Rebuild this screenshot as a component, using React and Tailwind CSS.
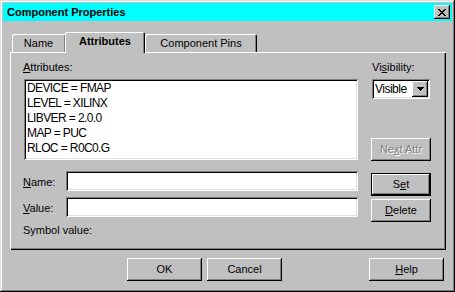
import React from 'react';

const raised =
  'shadow-[inset_-1px_-1px_0_#000,inset_1px_1px_0_#fff,inset_-2px_-2px_0_#808080]';
const sunken =
  'shadow-[inset_1px_1px_0_#808080,inset_-1px_-1px_0_#fff,inset_2px_2px_0_#000,inset_-2px_-2px_0_#dfdfdf]';

const CloseGlyph = () => (
  <svg width="8" height="7" viewBox="0 0 8 7" shapeRendering="crispEdges">
    <path
      fill="#000"
      d="M0 0h2v1H0z M6 0h2v1H6z M1 1h2v1H1z M5 1h2v1H5z M2 2h4v1H2z M3 3h2v1H3z M2 4h4v1H2z M1 5h2v1H1z M5 5h2v1H5z M0 6h2v1H0z M6 6h2v1H6z"
    />
  </svg>
);

const DownGlyph = () => (
  <svg width="7" height="4" viewBox="0 0 7 4" shapeRendering="crispEdges">
    <path fill="#000" d="M0 0h7v1H0z M1 1h5v1H1z M2 2h3v1H2z M3 3h1v1H3z" />
  </svg>
);

const Button = ({ children, className = '', disabled = false }) => (
  <div
    className={`flex items-center justify-center h-[23px] bg-[#c0c0c0] text-[11px] leading-[13px] ${
      disabled ? 'text-[#808080] [text-shadow:1px_1px_0_#fff]' : 'text-black'
    } ${raised} ${className}`}
  >
    {children}
  </div>
);

const attributes = ['DEVICE = FMAP', 'LEVEL = XILINX', 'LIBVER = 2.0.0', 'MAP = PUC', 'RLOC = R0C0.G'];

export default function App() {
  return (
    <div
      className="w-[455px] h-[292px] p-[3px] bg-[#c0c0c0] font-['Liberation_Sans',Arial,sans-serif] text-black shadow-[inset_-1px_-1px_0_#000,inset_1px_1px_0_#dfdfdf,inset_-2px_-2px_0_#808080,inset_2px_2px_0_#fff]"
    >
      {/* title bar */}
      <div className="flex items-center h-[18px] bg-[#00ffff] pl-[4px] pr-[2px]">
        <span className="text-[11px] font-bold leading-[13px]">Component Properties</span>
        <div className={`ml-auto flex items-center justify-center w-[16px] h-[14px] bg-[#c0c0c0] ${raised}`}>
          <CloseGlyph />
        </div>
      </div>

      <div className="pl-[7px] pt-[11px]">
        {/* tabs */}
        <div className="flex items-end h-[20px] pl-[2px]">
          <div className="flex items-center justify-center w-[53px] h-[18px] rounded-tl-[2px] text-[11px] leading-[13px] pt-[1px] shadow-[inset_1px_1px_0_#fff,inset_-1px_0_0_#808080]">
            Name
          </div>
          <div className="relative z-10 -mb-[1px] flex items-center justify-center w-[80px] h-[21px] bg-[#c0c0c0] rounded-t-[2px] text-[11px] font-bold leading-[13px] pb-[2px] shadow-[inset_1px_1px_0_#fff,inset_-1px_0_0_#000,inset_-2px_0_0_#808080]">
            Attributes
          </div>
          <div className="flex items-center justify-center w-[112px] h-[18px] rounded-t-[2px] text-[11px] leading-[13px] pt-[1px] shadow-[inset_1px_1px_0_#fff,inset_-1px_0_0_#000,inset_-2px_0_0_#808080]">
            Component Pins
          </div>
        </div>

        {/* panel */}
        <div className="flex w-[436px] h-[198px] shadow-[inset_1px_1px_0_#fff,inset_-1px_-1px_0_#000,inset_-2px_-2px_0_#808080]">
          <div className="flex flex-col w-[335px] ml-[13px] pt-[9px]">
            <div className="h-[13px] text-[11px] leading-[13px]">
              <span className="underline">A</span>ttributes:
            </div>
            <div className={`mt-[5px] ml-[1px] w-[334px] h-[81px] bg-white pl-[3px] pt-[2px] ${sunken}`}>
              {attributes.map((a) => (
                <div key={a} className="text-[12px] leading-[15px] tracking-[-0.6px] whitespace-nowrap">
                  {a}
                </div>
              ))}
            </div>
            <div className="flex items-start mt-[11px] h-[20px]">
              <span className="pt-[5px] text-[11px] leading-[13px]">
                <span className="underline">N</span>ame:
              </span>
              <div className={`ml-auto w-[292px] h-[20px] bg-white ${sunken}`} />
            </div>
            <div className="flex items-start mt-[6px] h-[20px]">
              <span className="pt-[5px] text-[11px] leading-[13px]">
                <span className="underline">V</span>alue:
              </span>
              <div className={`ml-auto w-[292px] h-[20px] bg-white ${sunken}`} />
            </div>
            <div className="mt-[7px] text-[11px] leading-[13px]">Symbol value:</div>
          </div>

          <div className="flex flex-col w-[61px] ml-[13px] pt-[9px]">
            <div className="ml-[1px] h-[13px] text-[11px] leading-[13px]">
              Vi<span className="underline">s</span>ibility:
            </div>
            <div className={`mt-[5px] ml-[1px] flex items-center w-[58px] h-[20px] bg-white p-[2px] ${sunken}`}>
              <span className="pl-[1px] text-[12px] leading-[15px] tracking-[-0.5px]">Visible</span>
              <div className={`ml-auto flex items-center justify-center w-[16px] h-[16px] bg-[#c0c0c0] ${raised}`}>
                <DownGlyph />
              </div>
            </div>
            <Button disabled className="mt-[39px] w-[60px] h-[20px]">
              Ne<span className="underline">x</span>t Attr
            </Button>
            <div className="mt-[12px] flex items-center justify-center w-[60px] h-[23px] text-[11px] leading-[13px] shadow-[inset_0_0_0_1px_#000,inset_-2px_-2px_0_#000,inset_2px_2px_0_#fff,inset_-3px_-3px_0_#808080]">
              S<span className="underline">e</span>t
            </div>
            <Button className="mt-[3px] w-[60px]">
              <span className="underline">D</span>elete
            </Button>
          </div>
        </div>

        {/* bottom buttons */}
        <div className="flex w-[436px] mt-[8px]">
          <Button className="ml-[117px] w-[75px]">OK</Button>
          <Button className="ml-[5px] w-[75px]">Cancel</Button>
          <Button className="ml-auto mr-[2px] w-[75px]">
            <span className="underline">H</span>elp
          </Button>
        </div>
      </div>
    </div>
  );
}
